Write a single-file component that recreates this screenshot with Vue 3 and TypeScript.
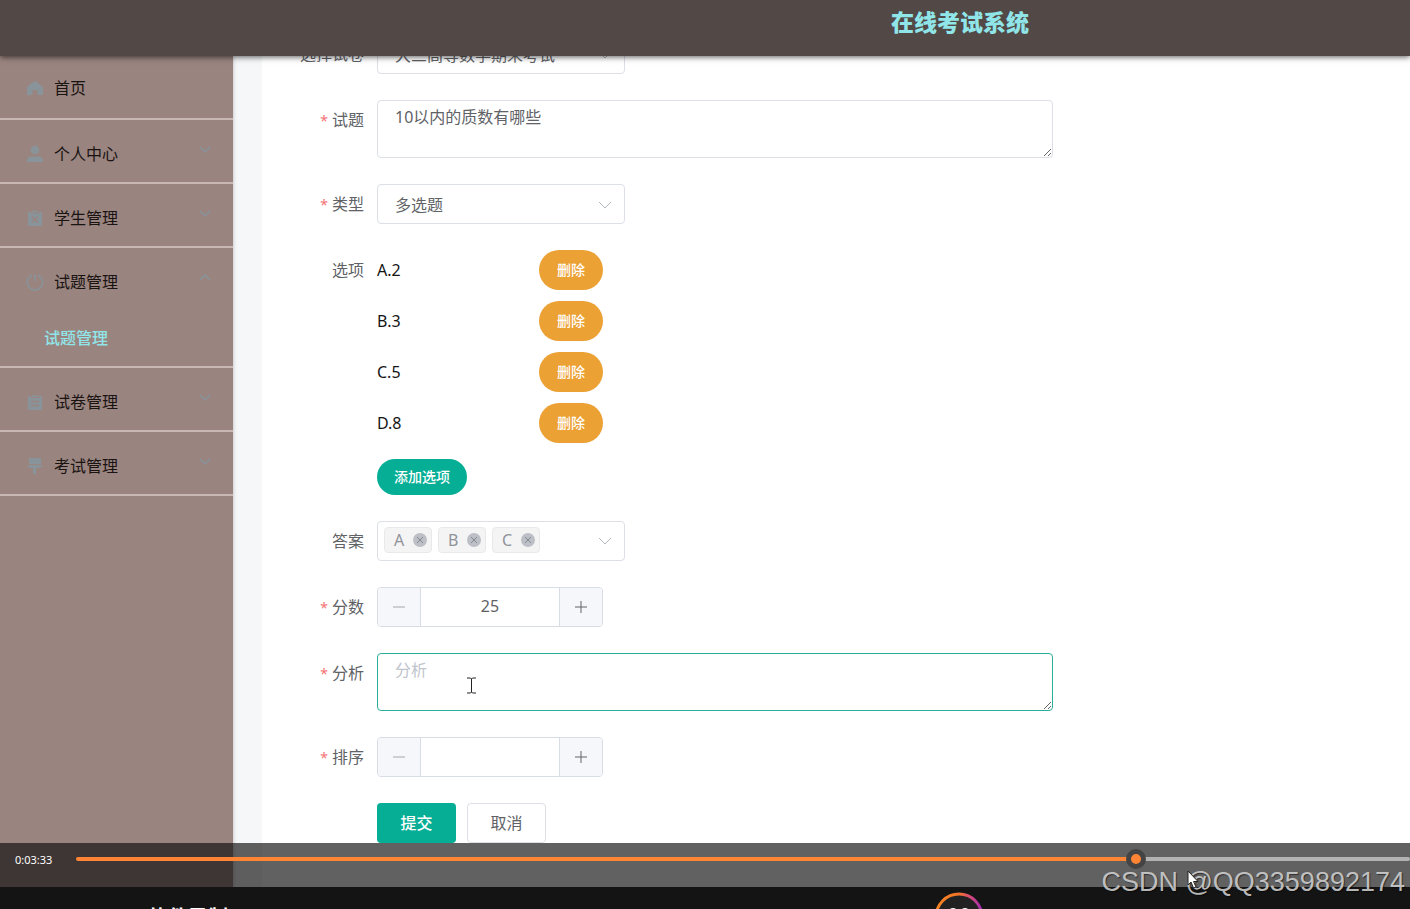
<script setup lang="ts">
import { computed, ref } from 'vue'

interface MenuItem {
  label: string
  icon: 'home' | 'user' | 'clipboardX' | 'power' | 'clipboard' | 'brush'
  arrow?: 'down' | 'up'
  child?: string
}

const menu: MenuItem[] = [
  { label: '首页', icon: 'home' },
  { label: '个人中心', icon: 'user', arrow: 'down' },
  { label: '学生管理', icon: 'clipboardX', arrow: 'down' },
  { label: '试题管理', icon: 'power', arrow: 'up', child: '试题管理' },
  { label: '试卷管理', icon: 'clipboard', arrow: 'down' },
  { label: '考试管理', icon: 'brush', arrow: 'down' },
]

const paper = ref('大三高等数学期末考试')
const question = ref('10以内的质数有哪些')
const kind = ref('多选题')
const options = ref(['A.2', 'B.3', 'C.5', 'D.8'])
const answers = ref(['A', 'B', 'C'])
const score = ref('25')
const analysis = ref('')
const order = ref('')

const progress = ref(799)
const trackStyle = computed(() => {
  const p = progress.value / 10
  return { background: `linear-gradient(to right, #ff8534 ${p}%, #b2b2b2 ${p}%)` }
})

function step(current: string, delta: number): string {
  return String(Math.max(0, Number(current || 0) + delta))
}
</script>

<template>
  <div class="page">
    <div class="stage">
      <header class="topbar">
        <h1>在线考试系统</h1>
      </header>

      <div class="body">
        <nav class="sidebar" aria-label="主菜单">
          <ul>
            <li v-for="item in menu" :key="item.label">
              <a href="#" class="entry" :class="{ sub: item.arrow }">
                <svg class="icon" viewBox="0 0 16 16" aria-hidden="true">
                  <path v-if="item.icon === 'home'" d="M8 1 1.500 5.500Q0 6.600 0 8.500V15h5.500v-3.500Q5.500 10 7 10h2q1.500 0 1.500 1.500V15H16V8.500q0-1.900-1.500-3z" />
                  <template v-else-if="item.icon === 'user'">
                    <circle cx="8" cy="4" r="4.300" />
                    <path d="M0 16v-1q0-4.500 4-4.500h8q4 0 4 4.500v1z" />
                  </template>
                  <template v-else-if="item.icon === 'clipboardX'">
                    <path d="M1 2h3v1.500h8V2h3v14H1z" />
                    <path d="M5 1.500Q8-.5 11 1.500V2.500H5z" />
                    <path class="cut" d="m5 6.500 6 6m0-6-6 6" />
                  </template>
                  <template v-else-if="item.icon === 'power'">
                    <path class="line" d="M5 1.300a7.600 7.600 0 1 0 6 0M8 0v7" />
                  </template>
                  <template v-else-if="item.icon === 'clipboard'">
                    <path d="M1 2h3v2h8V2h3v14H1z" />
                    <path d="M5 1.500h2L8 .3l1 1.200h2V3H5z" />
                    <path class="cut" d="M4 7.500h8M4 11.500h8" />
                  </template>
                  <template v-else>
                    <path d="M2 0h12v6H2zM1 7h14q0 3-3 3H9v6H6v-6H4Q1 10 1 7z" />
                  </template>
                </svg>
                <span>{{ item.label }}</span>
                <svg v-if="item.arrow" class="caret" viewBox="0 0 12 7" aria-hidden="true">
                  <path :d="item.arrow === 'down' ? 'm1 1 5 5 5-5' : 'm1 6 5-5 5 5'" />
                </svg>
              </a>
              <a v-if="item.child" href="#" class="child">{{ item.child }}</a>
            </li>
          </ul>
        </nav>

        <main class="panel">
          <form @submit.prevent>
            <div class="row">
              <label class="label" for="paper">选择试卷</label>
              <div class="select">
                <select id="paper" v-model="paper"><option>大三高等数学期末考试</option></select>
                <svg class="chevron" viewBox="0 0 14 8" aria-hidden="true"><path d="m1 1 6 6 6-6" /></svg>
              </div>
            </div>
            <div class="row">
              <label class="label required" for="question">试题</label>
              <textarea id="question" v-model="question"></textarea>
            </div>
            <div class="row">
              <label class="label required" for="kind">类型</label>
              <div class="select">
                <select id="kind" v-model="kind"><option>多选题</option></select>
                <svg class="chevron" viewBox="0 0 14 8" aria-hidden="true"><path d="m1 1 6 6 6-6" /></svg>
              </div>
            </div>
            <div class="row">
              <span class="label">选项</span>
              <div class="options">
                <div v-for="(option, i) in options" :key="option" class="option">
                  <span>{{ option }}</span>
                  <button type="button" class="delete" @click="options.splice(i, 1)">删除</button>
                </div>
                <button type="button" class="add">添加选项</button>
              </div>
            </div>
            <div class="row">
              <span class="label" id="answer-label">答案</span>
              <div class="select tags" role="group" aria-labelledby="answer-label">
                <span v-for="(answer, i) in answers" :key="answer" class="tag">
                  {{ answer }}
                  <button type="button" :aria-label="'移除 ' + answer" @click="answers.splice(i, 1)">
                    <svg viewBox="0 0 14 14" aria-hidden="true"><path d="m4 4 6 6m0-6-6 6" /></svg>
                  </button>
                </span>
                <svg class="chevron" viewBox="0 0 14 8" aria-hidden="true"><path d="m1 1 6 6 6-6" /></svg>
              </div>
            </div>
            <div class="row">
              <label class="label required" for="score">分数</label>
              <div class="number">
                <button type="button" class="minus" aria-label="减少分数" @click="score = step(score, -1)">
                  <svg viewBox="0 0 14 14" aria-hidden="true"><path d="M1 7h12" /></svg>
                </button>
                <input id="score" v-model="score" type="text" inputmode="numeric" />
                <button type="button" aria-label="增加分数" @click="score = step(score, 1)">
                  <svg viewBox="0 0 14 14" aria-hidden="true"><path d="M1 7h12M7 1v12" /></svg>
                </button>
              </div>
            </div>
            <div class="row">
              <label class="label required" for="analysis">分析</label>
              <textarea id="analysis" v-model="analysis" class="active" placeholder="分析"></textarea>
            </div>
            <div class="row">
              <label class="label required" for="order">排序</label>
              <div class="number">
                <button type="button" class="minus" aria-label="减少排序" @click="order = step(order, -1)">
                  <svg viewBox="0 0 14 14" aria-hidden="true"><path d="M1 7h12" /></svg>
                </button>
                <input id="order" v-model="order" type="text" inputmode="numeric" />
                <button type="button" aria-label="增加排序" @click="order = step(order, 1)">
                  <svg viewBox="0 0 14 14" aria-hidden="true"><path d="M1 7h12M7 1v12" /></svg>
                </button>
              </div>
            </div>
            <div class="row actions">
              <button type="submit" class="submit">提交</button>
              <button type="button" class="cancel">取消</button>
            </div>
          </form>
        </main>
      </div>

      <div class="player">
        <label for="seek">0:03:33</label>
        <input id="seek" v-model.number="progress" type="range" min="0" max="1000" :style="trackStyle" />
      </div>

      <svg class="ibeam" viewBox="0 0 9 17" aria-hidden="true">
        <path d="M0 1h3.500l1 1 1-1H9M4.500 2v13M0 16h3.500l1-1 1 1H9" />
      </svg>
    </div>

    <footer class="dock">
      <strong>软件录制</strong>
      <svg class="badge" viewBox="0 0 50 50" aria-hidden="true">
        <defs>
          <linearGradient id="ring" x1="0" x2="1">
            <stop offset="0" stop-color="#f58220" />
            <stop offset=".5" stop-color="#f0752a" />
            <stop offset=".72" stop-color="#d94d72" />
            <stop offset="1" stop-color="#9c2ab0" />
          </linearGradient>
        </defs>
        <circle cx="25" cy="25" r="23" fill="#222" stroke="url(#ring)" stroke-width="3" />
        <ellipse cx="19" cy="21" rx="5" ry="5" fill="#fff" />
        <ellipse cx="31" cy="21" rx="5" ry="5" fill="#fff" />
      </svg>
    </footer>

    <div class="watermark">CSDN @QQ3359892174</div>
    <svg class="pointer" viewBox="0 0 12 19" aria-hidden="true">
      <path d="M1 1v14l3-3 2.500 6 2.500-1-2.500-5.500H11z" />
    </svg>
  </div>
</template>

<style>
body {
  margin: 0;
  overflow: hidden;
}
</style>

<style scoped>
* {
  box-sizing: border-box;
}
.page {
  position: relative;
  display: flex;
  flex-direction: column;
  height: 100vh;
  overflow: hidden;
  background: #141414;
  font: 16px/24px "Noto Sans", "Noto Sans CJK SC", sans-serif;
  color: #606266;
}
button,
input,
select,
textarea {
  margin: 0;
  font: inherit;
  color: inherit;
}
button {
  padding: 0;
  border: 0;
  background: none;
}
.stage {
  position: relative;
  display: flex;
  flex: 1;
  flex-direction: column;
  min-height: 0;
  overflow: hidden;
}
.topbar {
  z-index: 1;
  flex: none;
  height: 56px;
  padding: 6px 0 0 891px;
  background: #524846;
  box-shadow: 0 1px 6px rgba(0, 0, 0, 0.65);
}
.topbar h1 {
  margin: 0;
  color: #90e5e8;
  font-size: 23px;
  font-weight: 900;
  line-height: 32px;
  white-space: nowrap;
}
.body {
  display: flex;
  flex: 1;
  min-height: 0;
  background: #f6f7f9;
}
.sidebar {
  flex: none;
  width: 233px;
  background: #9a847f;
  box-shadow: 0 0 4px rgba(0, 0, 0, 0.25);
}
.sidebar ul {
  margin: 0;
  padding: 0;
  list-style: none;
}
.sidebar li {
  border-bottom: 2px solid #c8b7b2;
}
.sidebar a {
  text-decoration: none;
}
.entry {
  display: flex;
  align-items: center;
  height: 62px;
  padding: 2px 22px 0 27px;
  color: #191312;
}
.entry.sub {
  padding-top: 5px;
}
.icon {
  width: 16px;
  height: 16px;
  margin-right: 11px;
  overflow: visible;
  fill: #88939a;
}
.icon .line {
  fill: none;
  stroke: #88939a;
  stroke-width: 1.5;
}
.icon .cut {
  fill: none;
  stroke: #9a847f;
  stroke-width: 1.5;
}
.caret {
  width: 12px;
  height: 7px;
  margin: 0 0 9px auto;
  overflow: visible;
  fill: none;
  stroke: #87949b;
  stroke-width: 1.5;
}
.child {
  display: flex;
  align-items: center;
  height: 56px;
  padding: 0 0 0 44px;
  color: #90e5e8;
  font-weight: 500;
}
.panel {
  flex: 1;
  min-width: 0;
  margin-left: 29px;
  overflow: hidden;
  background: #fff;
}
form {
  display: flex;
  flex-direction: column;
  gap: 26px;
  margin-top: -22px;
}
.row {
  display: flex;
  align-items: flex-start;
}
.label {
  flex: none;
  width: 115px;
  height: 40px;
  padding-right: 13px;
  line-height: 40px;
  text-align: right;
}
.required::before {
  content: "*";
  margin-right: 4px;
  color: #f27474;
  font-size: 14px;
  line-height: 1;
}
.select {
  position: relative;
  width: 248px;
  height: 40px;
}
.select select {
  width: 100%;
  height: 100%;
  padding: 2px 40px 0 17px;
  border: 1px solid #dcdfe6;
  border-radius: 4px;
  background: #fff;
  appearance: none;
}
.chevron {
  position: absolute;
  top: 17px;
  right: 13px;
  width: 14px;
  height: 8px;
  fill: none;
  stroke: #b4b8bf;
}
textarea {
  width: 676px;
  max-width: 100%;
  height: 58px;
  padding: 4px 17px;
  border: 1px solid #dcdfe6;
  border-radius: 4px;
  background: #fff;
  outline: none;
  resize: vertical;
}
textarea.active {
  border-color: #2bae99;
}
textarea::placeholder {
  color: #c0c4cc;
}
.options {
  display: flex;
  flex-direction: column;
  align-items: flex-start;
  gap: 11px;
}
.option {
  display: flex;
  align-items: center;
  justify-content: space-between;
  width: 226px;
  color: #151515;
}
.delete,
.add {
  border-radius: 20px;
  color: #fff;
  font-size: 14px;
  font-weight: 500;
}
.delete {
  width: 64px;
  height: 40px;
  background: #eca135;
}
.add {
  width: 90px;
  height: 36px;
  margin-top: 5px;
  background: #05ae94;
}
.tags {
  display: flex;
  align-items: center;
  gap: 6px;
  padding: 0 6px 2px;
  border: 1px solid #dcdfe6;
  border-radius: 4px;
}
.tags .chevron {
  top: 15px;
  right: 12px;
}
.tag {
  display: flex;
  align-items: center;
  justify-content: space-between;
  width: 48px;
  height: 26px;
  padding: 0 4px 0 9px;
  border: 1px solid #e9e9eb;
  border-radius: 4px;
  background: #f4f4f5;
  color: #909399;
}
.tag button {
  display: flex;
  width: 14px;
  height: 14px;
  border-radius: 50%;
  background: #bcbfc6;
}
.tag svg {
  width: 14px;
  height: 14px;
  stroke: #858991;
}
.number {
  display: flex;
  width: 226px;
  height: 40px;
  overflow: hidden;
  border: 1px solid #d8dce5;
  border-radius: 4px;
}
.number button {
  display: flex;
  flex: none;
  align-items: center;
  justify-content: center;
  width: 42px;
  background: #f5f7fa;
}
.number button svg {
  width: 14px;
  height: 14px;
  fill: none;
  stroke: #606266;
}
.number .minus svg {
  stroke: #a4a6aa;
}
.number input {
  flex: 1;
  min-width: 0;
  padding: 0 0 2px;
  border: 1px solid #d8dce5;
  border-width: 0 1px;
  background: #fff;
  outline: none;
  text-align: center;
}
.actions {
  gap: 11px;
  padding-left: 115px;
}
.actions button {
  width: 79px;
  height: 40px;
  border-radius: 4px;
}
.submit {
  background: #05ae94;
  color: #fff;
  font-weight: 500;
}
.actions .cancel {
  border: 1px solid #dcdfe6;
}
.player {
  position: absolute;
  right: 0;
  bottom: 0;
  left: 0;
  z-index: 2;
  display: flex;
  align-items: flex-start;
  height: 44px;
  padding-left: 15px;
  background: rgba(12, 12, 12, 0.65);
}
.player label {
  flex: none;
  width: 61px;
  padding-top: 8px;
  color: #fff;
  font-size: 11px;
  line-height: 18px;
}
.player input {
  flex: 1;
  min-width: 0;
  height: 4px;
  margin-top: 14px;
  border-radius: 2px;
  outline: none;
  appearance: none;
}
.player input::-webkit-slider-thumb {
  width: 20px;
  height: 20px;
  border: 5px solid #444;
  border-radius: 50%;
  background: #ff8534;
  appearance: none;
}
.ibeam {
  position: absolute;
  top: 677px;
  left: 467px;
  width: 9px;
  height: 17px;
  fill: none;
  stroke: #222;
}
.dock {
  position: relative;
  flex: none;
  height: 22px;
  padding-left: 148px;
  overflow: hidden;
  background: #141414;
  color: #fff;
}
.dock strong {
  display: block;
  padding-top: 15px;
  font-size: 20px;
  line-height: 32px;
}
.badge {
  position: absolute;
  top: 5px;
  left: 934px;
  width: 50px;
  height: 50px;
}
.watermark {
  position: absolute;
  right: 5px;
  bottom: 11px;
  z-index: 3;
  color: rgba(215, 215, 215, 0.85);
  font: 27px/32px "Liberation Sans", sans-serif;
  text-shadow: 1px 1px 1px rgba(0, 0, 0, 0.5);
  white-space: nowrap;
}
.pointer {
  position: absolute;
  right: 211px;
  bottom: 20px;
  z-index: 4;
  width: 12px;
  height: 19px;
  fill: #fff;
  stroke: #222;
}
</style>
